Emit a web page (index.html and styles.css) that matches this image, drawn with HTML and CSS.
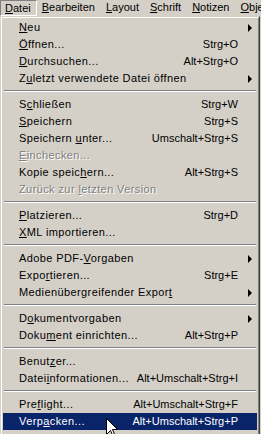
FILE: index.html
```html
<!DOCTYPE html>
<html lang="de">
<head>
    <meta charset="UTF-8">
    <title>Datei-Menü</title>
    <link rel="stylesheet" href="styles.css">
</head>
<body>
    <div class="menubar">
        <span class="bar-item open"><u>D</u>atei</span>
        <span class="bar-item"><u>B</u>earbeiten</span>
        <span class="bar-item"><u>L</u>ayout</span>
        <span class="bar-item"><u>S</u>chrift</span>
        <span class="bar-item"><u>N</u>otizen</span>
        <span class="bar-item"><u>O</u>bjekt</span>
    </div>

    <div class="menu">
        <div class="item sub"><span class="label"><u>N</u>eu</span></div>
        <div class="item"><span class="label"><u>Ö</u>ffnen...</span><span class="key">Strg+O</span></div>
        <div class="item"><span class="label"><u>D</u>urchsuchen...</span><span class="key">Alt+Strg+O</span></div>
        <div class="item sub"><span class="label">Z<u>u</u>letzt verwendete Datei öffnen</span></div>
        <div class="sep"></div>
        <div class="item"><span class="label">S<u>c</u>hließen</span><span class="key">Strg+W</span></div>
        <div class="item"><span class="label"><u>S</u>peichern</span><span class="key">Strg+S</span></div>
        <div class="item"><span class="label">Speichern <u>u</u>nter...</span><span class="key">Umschalt+Strg+S</span></div>
        <div class="item disabled"><span class="label"><u>E</u>inchecken...</span></div>
        <div class="item"><span class="label">Kopie speic<u>h</u>ern...</span><span class="key">Alt+Strg+S</span></div>
        <div class="item disabled"><span class="label">Zurück zur <u>l</u>etzten Version</span></div>
        <div class="sep"></div>
        <div class="item"><span class="label"><u>P</u>latzieren...</span><span class="key">Strg+D</span></div>
        <div class="item"><span class="label"><u>X</u>ML importieren...</span></div>
        <div class="sep"></div>
        <div class="item sub"><span class="label">Adobe PDF-<u>V</u>orgaben</span></div>
        <div class="item"><span class="label">Expo<u>r</u>tieren...</span><span class="key">Strg+E</span></div>
        <div class="item sub"><span class="label">Medienübergreifender Expor<u>t</u></span></div>
        <div class="sep"></div>
        <div class="item sub"><span class="label">D<u>o</u>kumentvorgaben</span></div>
        <div class="item"><span class="label">Doku<u>m</u>ent einrichten...</span><span class="key">Alt+Strg+P</span></div>
        <div class="sep"></div>
        <div class="item"><span class="label">Benut<u>z</u>er...</span></div>
        <div class="item"><span class="label">Datei<u>i</u>nformationen...</span><span class="key">Alt+Umschalt+Strg+I</span></div>
        <div class="sep"></div>
        <div class="item"><span class="label">Pre<u>f</u>light...</span><span class="key">Alt+Umschalt+Strg+F</span></div>
        <div class="item active"><span class="label">Verp<u>a</u>cken...</span><span class="key">Alt+Umschalt+Strg+P</span></div>
        <div class="item"><span class="label">Dr<u>u</u>ckvorgaben</span></div>

        <svg class="cursor" width="13" height="21" viewBox="0 0 13 21">
            <path d="M0.5 0.5 L0.5 16.5 L4.5 12.5 L7.5 19.5 L9.5 18.5 L6.5 11.5 L11.5 11.5 Z" fill="#fff" stroke="#000" stroke-width="1"/>
        </svg>
    </div>
</body>
</html>
```

FILE: styles.css
```css
body {
    margin: 0;
    background-color: #d4d0c8;
    font-family: "Liberation Sans", Arial, sans-serif;
    font-size: 11px;
    color: #000;
    overflow: hidden;
}
u {
    text-decoration: underline;
    text-underline-offset: 1px;
}
.menubar {
    display: flex;
    height: 16px;
    line-height: 15px;
    white-space: nowrap;
}
.bar-item {
    padding: 0 6px 0 5px;
    box-sizing: border-box;
    height: 16px;
}
.bar-item.open {
    border-right: 1px solid #fff;
    border-bottom: 1px solid #fff;
    border-left: 1px solid #808080;
    border-top: 1px solid #808080;
    padding: 0 5px 0 4px;
    line-height: 14px;
}
.menu {
    position: relative;
    width: 260px;
    box-sizing: border-box;
    padding: 2px 2px 0 2px;
    border: 1px solid;
    border-color: #d4d0c8 #404040 #404040 #d4d0c8;
}
.menu::before {
    content: "";
    position: absolute;
    inset: 0;
    border: 1px solid;
    border-color: #fff #808080 #808080 #fff;
    pointer-events: none;
}
.item {
    position: relative;
    display: flex;
    justify-content: space-between;
    height: 17px;
    line-height: 17px;
    padding: 0 19px 0 16px;
    white-space: nowrap;
}
.label {
    letter-spacing: 0.4px;
}
.item.sub::after {
    content: "";
    position: absolute;
    right: 5px;
    top: 5px;
    border-left: 4px solid #000;
    border-top: 4px solid transparent;
    border-bottom: 4px solid transparent;
}
.item.disabled {
    color: #808080;
    text-shadow: 1px 1px 0 #fff;
}
.item.active {
    background-color: #0a246a;
    color: #fff;
}
.sep {
    height: 9px;
    box-sizing: border-box;
    padding-top: 3px;
}
.sep::before {
    content: "";
    display: block;
    margin: 0 1px;
    border-top: 1px solid #808080;
    border-bottom: 1px solid #fff;
}
.cursor {
    position: absolute;
    left: 105px;
    top: 401px;
}
```
